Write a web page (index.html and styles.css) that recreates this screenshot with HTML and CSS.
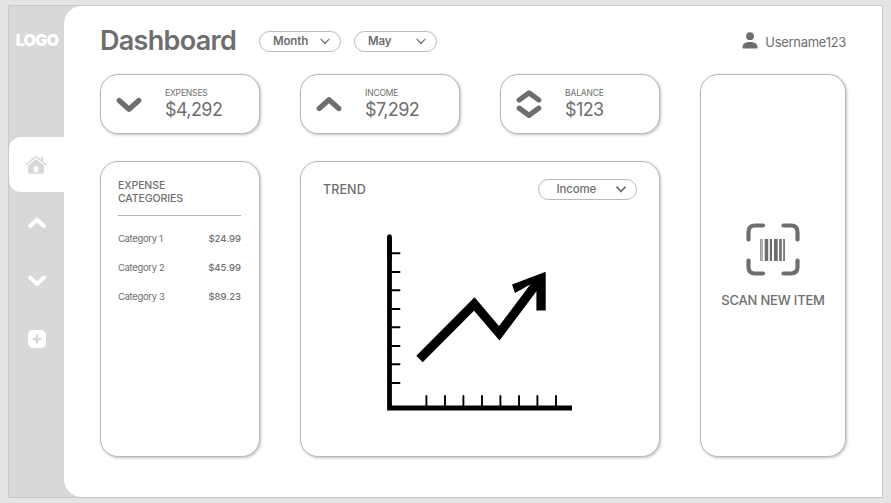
FILE: index.html
```html
<!DOCTYPE html>
<html lang="en">
<head>
<meta charset="utf-8">
<title>Dashboard</title>
<link rel="stylesheet" href="styles.css">
</head>
<body>
<div class="frame">
  <nav class="sidebar">
    <div class="logo">LOGO</div>
    <a class="nav-home"><svg width="22" height="20" viewBox="0 0 22 20"><path class="soft-line" d="M1 9.7 11 1.5l10 8.2"/><path class="soft-fill" d="M16 2.3h2v4l-2-1.7zM11 4l8 6.6v6.2a2 2 0 0 1-2 2H5a2 2 0 0 1-2-2v-6.2zM8.7 11.2v6h4.6v-6z" fill-rule="evenodd"/></svg></a>
    <a class="nav-item"><svg width="18" height="12" viewBox="0 0 18 12"><path class="nav-line" d="M2.2 9 9 2.6 15.800 9"/></svg></a>
    <a class="nav-item"><svg width="18" height="12" viewBox="0 0 18 12"><path class="nav-line" d="M2.2 2.6 9 9l6.800-6.400"/></svg></a>
    <a class="nav-item"><svg width="18" height="18" viewBox="0 0 18 18"><rect width="18" height="18" rx="5" fill="#fff"/><path d="M9 5.800v6.400M5.800 9h6.400" stroke="#d8d8d8" stroke-width="2.600" stroke-linecap="round"/></svg></a>
  </nav>
  <main class="main">
    <header class="header">
      <h1 class="title">Dashboard</h1>
      <button class="pill pill-month"><span>Month</span><svg width="10" height="7" viewBox="0 0 10 7"><path class="thin" d="M1 1.200 5 5.500l4-4.300"/></svg></button>
      <button class="pill pill-may"><span>May</span><svg width="10" height="7" viewBox="0 0 10 7"><path class="thin" d="M1 1.200 5 5.500l4-4.300"/></svg></button>
      <div class="user">
        <svg width="16" height="17" viewBox="0 0 16 17"><circle cx="8" cy="4.200" r="3.900"/><path d="M.5 15.200C.5 11.800 3.500 10 8 10s7.500 1.800 7.500 5.200q0 1.200-1.200 1.200H1.700Q.5 16.400.5 15.200z"/></svg>
        <span class="username">Username123</span>
      </div>
    </header>
    <div class="grid">
      <section class="card stat">
        <svg width="28" height="30" viewBox="0 0 28 30"><path class="thick" d="M4.200 11.500 14 20.300l9.800-8.800"/></svg>
        <div><div class="label">EXPENSES</div><div class="value">$4,292</div></div>
      </section>
      <section class="card stat">
        <svg width="28" height="30" viewBox="0 0 28 30"><path class="thick" d="M4.200 19.500 14 10.700l9.800 8.800"/></svg>
        <div><div class="label">INCOME</div><div class="value">$7,292</div></div>
      </section>
      <section class="card stat">
        <svg width="28" height="30" viewBox="0 0 28 30"><path class="thick" d="M4.200 11 14 3.800l9.800 7.200M4.200 19.200 14 26.300l9.800-7.100"/></svg>
        <div><div class="label">BALANCE</div><div class="value">$123</div></div>
      </section>
      <section class="card scan">
        <svg width="54" height="54" viewBox="0 0 54 54">
          <path class="bracket" d="M2.500 16.500V9q0-6.500 6.500-6.500h8M37.500 2.500h7.500q6.500 0 6.500 6.500v7.500M51.500 37.500V44q0 6.500-6.500 6.500h-7.500M17 50.500H9q-6.500 0-6.500-6.500v-6.500"/>
          <path d="M14.300 16h1.200v22h-1.200zM18.700 16h3.500v22h-3.500zM23.800 16H26v22h-2.200zM28 16h3.700v22H28zM33.200 16h2.600v22h-2.600zM37.200 16h1.700v22h-1.700zM16.200 16h.6v22h-.6z"/>
        </svg>
        <div class="scan-label">SCAN NEW ITEM</div>
      </section>
      <section class="card categories">
        <h2 class="heading">EXPENSE<br>CATEGORIES</h2>
        <div class="row"><span>Category 1</span><b>$24.99</b></div>
        <div class="row"><span>Category 2</span><b>$45.99</b></div>
        <div class="row"><span>Category 3</span><b>$89.23</b></div>
      </section>
      <section class="card trend">
        <div class="trend-head">
          <h2 class="trend-title">TREND</h2>
          <button class="pill pill-income"><span>Income</span><svg width="10" height="7" viewBox="0 0 10 7"><path class="medium" d="M1 1.200 5 5.500l4-4.300"/></svg></button>
        </div>
        <svg class="chart" width="186" height="178" viewBox="387 234 186 178">
          <path d="M389.500 236.500V260" stroke-width="4.600" stroke-linecap="round"/>
          <path d="M389.500 237V408H572" stroke-width="4.800"/>
          <path d="M390 253.300h9.500M390 272h9.500M390 290.300h9.500M390 309h9.500M390 327.300h9.500M390 346h9.500M390 364.300h9.500M390 383h9.500M426.400 396v11M445 396v11M463.400 396v11M482 396v11M500.400 396v11M519 396v11M537.400 396v11M556 396v11" stroke-width="1.900" stroke-linecap="round"/>
          <path d="M419.500 359 474.300 304l25 29.300 40.500-54" stroke-width="9"/>
          <path d="M545.700 271.700v38.700h-9.300V281L515 293l-3-8.500z" fill="#000" stroke="none"/>
        </svg>
      </section>
    </div>
  </main>
</div>
</body>
</html>
```
FILE: styles.css
```css
* { box-sizing: border-box; }
body {
  margin: 0;
  height: 503px;
  padding: 5px 8px;
  background: #e4e4e4;
  font-family: Inter, "Liberation Sans", sans-serif;
  color: #6e6e6e;
  overflow: hidden;
}
svg { display: block; flex: none; fill: #6e6e6e; }
.frame {
  display: flex;
  width: 875px;
  height: 493px;
  border: 1px solid #c9c9c9;
  background: #d8d8d8;
}
.sidebar {
  width: 55px;
  flex: none;
  display: flex;
  flex-direction: column;
  align-items: center;
}
.logo {
  margin-top: 24px;
  padding-left: 1px;
  height: 20px;
  line-height: 20px;
  font-size: 16px;
  font-weight: 900;
  letter-spacing: -0.7px;
  color: #fff;
}
.nav-home {
  width: 55px;
  height: 55px;
  margin-top: 87px;
  margin-bottom: 2px;
  padding-right: 1px;
  display: flex;
  align-items: center;
  justify-content: center;
  background: #fff;
  border-radius: 12px 0 0 12px;
}
.nav-item {
  height: 58px;
  display: flex;
  align-items: center;
}
.soft-line { fill: none; stroke: #d8d8d8; stroke-width: 1.5; stroke-linecap: round; }
.soft-fill { fill: #d8d8d8; }
.nav-line { fill: none; stroke: #fff; stroke-width: 4; stroke-linecap: round; stroke-linejoin: round; }
.main {
  flex: 1;
  padding: 18px 36px 0;
  background: #fff;
  border-radius: 18px 0 0 18px;
}
.header { display: flex; align-items: center; height: 34px; }
.title {
  width: 159px;
  margin: 0;
  font-size: 27px;
  line-height: 34px;
  font-weight: 600;
  letter-spacing: -0.7px;
}
.pill {
  display: flex;
  align-items: center;
  justify-content: space-between;
  height: 21px;
  padding: 0 10px 0 13px;
  border: 1px solid #b9b9b9;
  border-radius: 11px;
  background: #fff;
  font: 600 11.5px/19px Inter, sans-serif;
  letter-spacing: -0.15px;
  color: #6e6e6e;
}
.pill-month { width: 82px; }
.pill-may { width: 83px; margin-left: 13px; }
.pill-income { width: 99px; padding-left: 18px; font-weight: 500; }
.thin { fill: none; stroke: #6e6e6e; stroke-width: 1.2; stroke-linecap: round; stroke-linejoin: round; }
.medium { fill: none; stroke: #6e6e6e; stroke-width: 1.8; stroke-linecap: round; stroke-linejoin: round; }
.user { display: flex; align-items: center; margin-left: auto; gap: 7px; }
.user svg { margin-top: -1px; }
.username { font-size: 13px; line-height: 18px; padding-top: 2px; letter-spacing: -0.3px; }
.grid {
  display: grid;
  grid-template-columns: 159.5px 159.5px 159.5px 146px;
  grid-template-rows: 60px 295.5px;
  column-gap: 40.5px;
  row-gap: 27px;
  margin-top: 16px;
}
.card {
  border: 1px solid #b9b9b9;
  border-radius: 18px;
  background: #fff;
  box-shadow: 1px 1px 3px rgba(0, 0, 0, 0.25);
}
.stat { display: flex; align-items: center; padding-left: 14px; gap: 22px; }
.thick { fill: none; stroke: #6e6e6e; stroke-width: 5.2; stroke-linecap: round; stroke-linejoin: round; }
.label { font-size: 8.5px; line-height: 11px; letter-spacing: -0.15px; }
.value { font-size: 18px; line-height: 22px; letter-spacing: -0.6px; }
.scan {
  grid-column: 4;
  grid-row: 1 / 3;
  display: flex;
  flex-direction: column;
  align-items: center;
  padding-top: 148px;
}
.bracket { fill: none; stroke: #6e6e6e; stroke-width: 4.2; stroke-linecap: round; }
.scan-label { margin-top: 14px; font-size: 13px; line-height: 18px; font-weight: 500; letter-spacing: -0.2px; white-space: nowrap; }
.categories { padding: 17px 17.5px 0 17px; }
.heading {
  margin: 0 0 8px;
  padding-bottom: 10px;
  border-bottom: 1px solid #b5b5b5;
  font-size: 10.5px;
  line-height: 13px;
  font-weight: 500;
  letter-spacing: -0.1px;
}
.row {
  display: flex;
  justify-content: space-between;
  font-size: 9.5px;
  line-height: 29px;
}
.row span { letter-spacing: -0.35px; }
.row b { font-weight: 500; }
.trend { grid-column: 2 / 4; padding: 17px 22px 0; }
.trend-head { display: flex; align-items: center; justify-content: space-between; }
.trend-title { margin: 0; font-size: 12.5px; line-height: 21px; font-weight: 500; letter-spacing: 0.1px; }
.chart { margin: 34px 0 0 64px; fill: none; stroke: #000; }
```
